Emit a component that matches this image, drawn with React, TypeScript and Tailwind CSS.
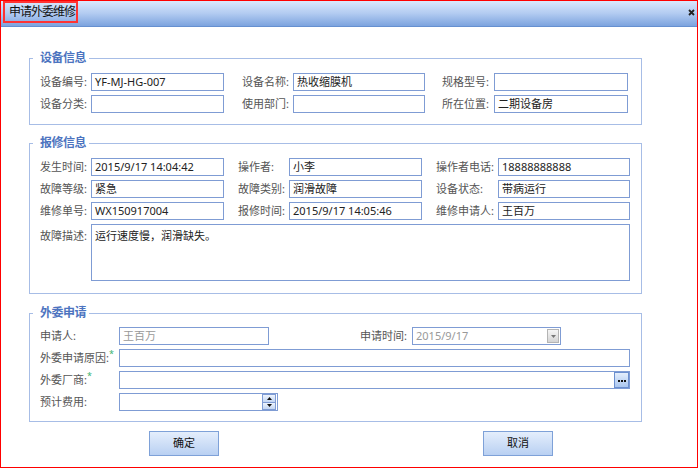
import React from "react";

const lbl = "text-[11px] text-[#555] leading-[18px] whitespace-nowrap";
const box =
  "h-[18px] border border-[#7f9cd4] bg-white px-[3px] flex items-center text-[11px] text-[#222] leading-[16px] whitespace-nowrap overflow-hidden";

function Field({ w, value, muted }: { w: string; value?: string; muted?: boolean }) {
  return <div className={`${box} ${w} ${muted ? "text-[#999]" : ""}`}>{value}</div>;
}

function Req() {
  return <span className="text-[#3cb371] text-[9px] align-top leading-[10px]">*</span>;
}

function Group({
  title,
  className,
  children,
}: {
  title: string;
  className: string;
  children: React.ReactNode;
}) {
  return (
    <div className={`relative border border-[#a7bde6] w-[613px] pl-[10px] ${className}`}>
      <div className="absolute left-[3px] top-[-8px] bg-white pl-[7px] pr-[3px] text-[12px] font-bold leading-[14px] tracking-[-0.5px] text-[#4d74c0]">
        {title}
      </div>
      {children}
    </div>
  );
}

export default function App() {
  return (
    <div className="w-[698px] h-[468px] border border-[#ff0000] bg-white flex flex-col font-['Noto_Sans','Noto_Sans_CJK_SC',sans-serif]">
      {/* title bar */}
      <div className="relative h-[26px] shrink-0 border-b border-[#6690d0] bg-gradient-to-b from-[#dbe8fc] via-[#b2cbf1] to-[#7ca3de] flex items-start pl-[2px]">
        <div className="h-[22px] w-[75px] border-2 border-[#ff3333] flex items-center pl-[4px] text-[12px] tracking-[-1px] text-[#111] leading-[14px]">
          申请外委维修
        </div>
        <svg className="absolute right-[2px] top-[8px]" width="7" height="7" viewBox="0 0 7 7">
          <path d="M1 1 L6 6 M6 1 L1 6" stroke="#222" strokeWidth="1.8" />
        </svg>
      </div>

      {/* body */}
      <div className="flex-1 px-[28px] pt-[31px]">
        <Group title="设备信息" className="pt-[14px] pb-[11px]">
          <div className="flex flex-col gap-[4px]">
            <div className="flex items-center">
              <span className={`${lbl} w-[51px]`}>设备编号:</span>
              <Field w="w-[133px]" value="YF-MJ-HG-007" />
              <span className={`${lbl} w-[51px] ml-[18px]`}>设备名称:</span>
              <Field w="w-[132px]" value="热收缩膜机" />
              <span className={`${lbl} w-[52px] ml-[17px]`}>规格型号:</span>
              <Field w="w-[134px]" />
            </div>
            <div className="flex items-center">
              <span className={`${lbl} w-[51px]`}>设备分类:</span>
              <Field w="w-[133px]" />
              <span className={`${lbl} w-[51px] ml-[18px]`}>使用部门:</span>
              <Field w="w-[132px]" />
              <span className={`${lbl} w-[52px] ml-[17px]`}>所在位置:</span>
              <Field w="w-[134px]" value="二期设备房" />
            </div>
          </div>
        </Group>

        <Group title="报修信息" className="mt-[18px] pt-[14px] pb-[12px]">
          <div className="flex flex-col gap-[4px]">
            <div className="flex items-center">
              <span className={`${lbl} w-[51px]`}>发生时间:</span>
              <Field w="w-[133px]" value="2015/9/17 14:04:42" />
              <span className={`${lbl} w-[51px] ml-[14px]`}>操作者:</span>
              <Field w="w-[133px]" value="小李" />
              <span className={`${lbl} w-[62px] ml-[14px]`}>操作者电话:</span>
              <Field w="w-[132px]" value="18888888888" />
            </div>
            <div className="flex items-center">
              <span className={`${lbl} w-[51px]`}>故障等级:</span>
              <Field w="w-[133px]" value="紧急" />
              <span className={`${lbl} w-[51px] ml-[14px]`}>故障类别:</span>
              <Field w="w-[133px]" value="润滑故障" />
              <span className={`${lbl} w-[62px] ml-[14px]`}>设备状态:</span>
              <Field w="w-[132px]" value="带病运行" />
            </div>
            <div className="flex items-center">
              <span className={`${lbl} w-[51px]`}>维修单号:</span>
              <Field w="w-[133px]" value="WX150917004" />
              <span className={`${lbl} w-[51px] ml-[14px]`}>报修时间:</span>
              <Field w="w-[133px]" value="2015/9/17 14:05:46" />
              <span className={`${lbl} w-[62px] ml-[14px]`}>维修申请人:</span>
              <Field w="w-[132px]" value="王百万" />
            </div>
            <div className="flex items-start">
              <span className={`${lbl} w-[51px] pt-[3px]`}>故障描述:</span>
              <div className="w-[539px] h-[57px] border border-[#7f9cd4] px-[3px] pt-[3px] text-[11px] leading-[15px] text-[#222]">
                运行速度慢，润滑缺失。
              </div>
            </div>
          </div>
        </Group>

        <Group title="外委申请" className="mt-[19px] pt-[13px] pb-[10px]">
          <div className="flex flex-col gap-[4px]">
            <div className="flex items-center">
              <span className={`${lbl} w-[79px]`}>申请人:</span>
              <Field w="w-[150px]" value="王百万" muted />
              <span className={`${lbl} w-[52px] ml-[91px]`}>申请时间:</span>
              <div className={`${box} w-[149px] text-[#999] justify-between pr-[1px]`}>
                <span>2015/9/17</span>
                <div className="w-[12px] h-[14px] border border-[#b4b4b4] bg-gradient-to-b from-[#f6f6f6] to-[#d4d4d4] flex items-center justify-center">
                  <svg width="5" height="3" viewBox="0 0 5 3">
                    <path d="M0 0 H5 L2.5 3 Z" fill="#777" />
                  </svg>
                </div>
              </div>
            </div>
            <div className="flex items-center">
              <span className={`${lbl} w-[79px]`}>
                外委申请原因:<Req />
              </span>
              <Field w="w-[511px]" />
            </div>
            <div className="flex items-center">
              <span className={`${lbl} w-[79px]`}>
                外委厂商:<Req />
              </span>
              <div className={`${box} w-[511px] justify-end pr-0`}>
                <div className="w-[15px] h-[16px] border border-[#6b8fcf] bg-gradient-to-b from-[#e4eefc] to-[#aac6ef] flex items-end justify-center pb-[5px] gap-[1px]">
                  <span className="w-[2px] h-[2px] bg-[#111]" />
                  <span className="w-[2px] h-[2px] bg-[#111]" />
                  <span className="w-[2px] h-[2px] bg-[#111]" />
                </div>
              </div>
            </div>
            <div className="flex items-center">
              <span className={`${lbl} w-[79px]`}>预计费用:</span>
              <div className={`${box} w-[159px] justify-end pr-[1px]`}>
                <div className="w-[14px] h-[16px] flex flex-col">
                  <div className="flex-1 border border-[#7f9cd4] bg-gradient-to-b from-[#eef4fd] to-[#c3d6f3] flex items-center justify-center">
                    <svg width="5" height="3" viewBox="0 0 5 3">
                      <path d="M0 3 H5 L2.5 0 Z" fill="#111" />
                    </svg>
                  </div>
                  <div className="flex-1 border border-t-0 border-[#7f9cd4] bg-gradient-to-b from-[#eef4fd] to-[#c3d6f3] flex items-center justify-center">
                    <svg width="5" height="3" viewBox="0 0 5 3">
                      <path d="M0 0 H5 L2.5 3 Z" fill="#111" />
                    </svg>
                  </div>
                </div>
              </div>
            </div>
          </div>
        </Group>

        <div className="flex mt-[9px] ml-[120px] gap-[264px]">
          <button className="w-[70px] h-[25px] border border-[#7ea1d8] bg-gradient-to-b from-[#e4eefc] to-[#b9d0f2] text-[11px] text-[#111] flex items-center justify-center">
            确定
          </button>
          <button className="w-[70px] h-[25px] border border-[#7ea1d8] bg-gradient-to-b from-[#e4eefc] to-[#b9d0f2] text-[11px] text-[#111] flex items-center justify-center">
            取消
          </button>
        </div>
      </div>
    </div>
  );
}
